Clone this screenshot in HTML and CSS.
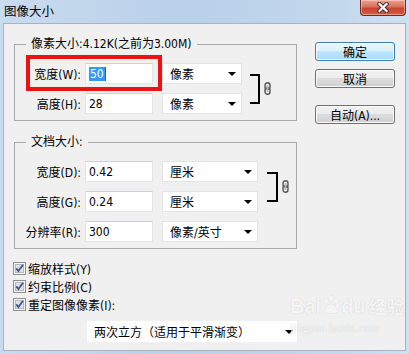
FILE: index.html
```html
<!DOCTYPE html>
<html lang="zh-CN">
<head>
    <meta charset="UTF-8">
    <meta name="viewport" content="width=device-width, initial-scale=1.0">
    <title>图像大小</title>
    <link rel="stylesheet" href="styles.css">
</head>
<body>

<div class="window">
    <div class="titlebar">
        <span class="title">图像大小</span>
        <button class="close" title="关闭">
            <svg width="12" height="11" viewBox="0 0 12 11">
                <path d="M2.5 2l7 7M9.5 2l-7 7" stroke="#4b3030" stroke-width="4.2" stroke-linecap="square"/>
                <path d="M2.5 2l7 7M9.5 2l-7 7" stroke="#fff" stroke-width="2.2" stroke-linecap="square"/>
            </svg>
        </button>
    </div>

    <div class="client">
        <div class="main">
            <!-- 像素大小 -->
            <fieldset class="group">
                <legend>像素大小:4.12K(之前为3.00M)</legend>
                <div class="linked">
                    <div class="rows">
                        <div class="row marked">
                            <label>宽度(W):</label>
                            <div class="field"><span class="sel">50</span><span class="caret"></span></div>
                            <div class="select px">像素<i class="arrow"></i></div>
                            <div class="highlight"></div>
                        </div>
                        <div class="row">
                            <label>高度(H):</label>
                            <div class="field">28</div>
                            <div class="select px">像素<i class="arrow"></i></div>
                        </div>
                    </div>
                    <div class="bracket b1"></div>
                    <svg class="chain" width="7" height="13" viewBox="0 0 7 13">
                        <rect x="1" y="0.8" width="5" height="6.4" rx="2.5" fill="none" stroke="#555" stroke-width="1.4"/>
                        <rect x="1" y="5.8" width="5" height="6.4" rx="2.5" fill="none" stroke="#555" stroke-width="1.4"/>
                        <rect x="2.6" y="3" width="1.8" height="7" fill="#bbb"/>
                    </svg>
                </div>
            </fieldset>

            <!-- 文档大小 -->
            <fieldset class="group">
                <legend>文档大小:</legend>
                <div class="linked">
                    <div class="rows">
                        <div class="row">
                            <label>宽度(D):</label>
                            <div class="field">0.42</div>
                            <div class="select doc">厘米<i class="arrow"></i></div>
                        </div>
                        <div class="row">
                            <label>高度(G):</label>
                            <div class="field">0.24</div>
                            <div class="select doc">厘米<i class="arrow"></i></div>
                        </div>
                    </div>
                    <div class="bracket b2"></div>
                    <svg class="chain" width="7" height="13" viewBox="0 0 7 13">
                        <rect x="1" y="0.8" width="5" height="6.4" rx="2.5" fill="none" stroke="#555" stroke-width="1.4"/>
                        <rect x="1" y="5.8" width="5" height="6.4" rx="2.5" fill="none" stroke="#555" stroke-width="1.4"/>
                        <rect x="2.6" y="3" width="1.8" height="7" fill="#bbb"/>
                    </svg>
                </div>
                <div class="row">
                    <label>分辨率(R):</label>
                    <div class="field">300</div>
                    <div class="select doc">像素/英寸<i class="arrow"></i></div>
                </div>
            </fieldset>

            <div class="checks">
                <div class="check">
                    <svg width="13" height="13" viewBox="0 0 13 13"><rect x="0.5" y="0.5" width="12" height="12" fill="#f6f6f6" stroke="#8e8f8f"/><rect x="2.5" y="2.5" width="8" height="8" fill="#dfe3e8" stroke="#b4b8bd"/><path d="M3.2 6.4l2.2 2.6L10 2.8" fill="none" stroke="#3d5494" stroke-width="1.8"/></svg>
                    <span>缩放样式(Y)</span>
                </div>
                <div class="check">
                    <svg width="13" height="13" viewBox="0 0 13 13"><rect x="0.5" y="0.5" width="12" height="12" fill="#f6f6f6" stroke="#8e8f8f"/><rect x="2.5" y="2.5" width="8" height="8" fill="#dfe3e8" stroke="#b4b8bd"/><path d="M3.2 6.4l2.2 2.6L10 2.8" fill="none" stroke="#3d5494" stroke-width="1.8"/></svg>
                    <span>约束比例(C)</span>
                </div>
                <div class="check">
                    <svg width="13" height="13" viewBox="0 0 13 13"><rect x="0.5" y="0.5" width="12" height="12" fill="#f6f6f6" stroke="#8e8f8f"/><rect x="2.5" y="2.5" width="8" height="8" fill="#dfe3e8" stroke="#b4b8bd"/><path d="M3.2 6.4l2.2 2.6L10 2.8" fill="none" stroke="#3d5494" stroke-width="1.8"/></svg>
                    <span>重定图像像素(I):</span>
                </div>
            </div>

            <div class="method">两次立方（适用于平滑渐变）<i class="arrow"></i></div>
        </div>

        <div class="buttons">
            <button class="btn default">确定</button>
            <button class="btn">取消</button>
            <button class="btn auto">自动(A)...</button>
        </div>

        <div class="watermark">
            <div class="wm-logo">Bai<svg width="18" height="20" viewBox="0 0 18 20"><ellipse cx="4" cy="6" rx="2.2" ry="3" /><ellipse cx="9" cy="3.5" rx="2.2" ry="3"/><ellipse cx="14" cy="6" rx="2.2" ry="3"/><ellipse cx="15.5" cy="11" rx="2" ry="2.6"/><path d="M9 9c-4 0-7 5-6 8 1 2 4 1 6 1s5 1 6-1c1-3-2-8-6-8z"/></svg>du<span class="wm-cn">经验</span></div>
            <div class="wm-url">jingyan.baidu.com</div>
        </div>
    </div>
</div>

</body>
</html>
```

FILE: styles.css
```css
* {
    box-sizing: border-box;
}
html, body {
    margin: 0;
}
body {
    width: 409px;
    height: 354px;
    overflow: hidden;
    font-family: "DejaVu Sans Condensed", "Liberation Sans", "Noto Sans CJK SC", sans-serif;
    font-size: 12px;
    color: #000;
}
.window {
    height: 354px;
    display: flex;
    flex-direction: column;
    background: linear-gradient(to right, #c9dbee, #b9d0e9 45%, #c2d7ec 80%, #cfe0f1);
}
.titlebar {
    height: 23px;
    flex: none;
    display: flex;
    align-items: flex-start;
    padding: 0 3px 0 4px;
}
.title {
    font-family: "Noto Sans CJK SC", sans-serif;
    font-size: 12.5px;
    line-height: 16px;
    margin-top: 3px;
}
.close {
    margin-left: auto;
    width: 46px;
    height: 16px;
    padding: 0;
    border: 1px solid #6e2a20;
    border-top: none;
    border-radius: 0 0 4px 4px;
    background: linear-gradient(#e9a494, #d9705c 45%, #c8462f 55%, #cf5a3f);
    box-shadow: inset 0 0 0 1px rgba(255, 220, 210, 0.5);
    display: flex;
    align-items: center;
    justify-content: center;
}
.client {
    flex: 1;
    margin: 0 3px 3px;
    border: 1px solid #a3b4c8;
    background: #f0f0f0;
    display: flex;
    gap: 18px;
    padding: 12px 10px 0;
    position: relative;
}
.main {
    width: 283px;
    flex: none;
}
.group {
    margin: 0;
    padding: 11px 0 6px;
    border: 1px solid #a9a9a9;
    min-width: 0;
}
.group + .group {
    margin-top: 13px;
}
.group legend {
    margin-left: 11px;
    padding: 0 5px;
    line-height: 16px;
}
.linked {
    display: flex;
    align-items: center;
}
.row {
    display: flex;
    align-items: center;
    height: 21px;
}
.row + .row,
.linked + .row {
    margin-top: 9px;
}
.marked {
    position: relative;
}
.row label {
    width: 66px;
    margin-right: 4px;
    text-align: right;
    white-space: nowrap;
}
.field {
    width: 68px;
    height: 21px;
    background: #fff;
    border: 1px solid #e1e4e8;
    border-top-color: #cdd1d7;
    padding: 0 3px;
    display: flex;
    align-items: center;
}
.sel {
    background: #3399ff;
    color: #fff;
    padding: 0 1px;
    line-height: 14px;
}
.caret {
    width: 1px;
    height: 14px;
    background: #8a4a10;
}
.select {
    height: 21px;
    margin-left: 9px;
    background: #fff;
    border: 1px solid #e4e4e4;
    padding: 0 5px 0 7px;
    display: flex;
    align-items: center;
}
.select.px {
    width: 80px;
}
.select.doc {
    width: 96px;
}
.arrow {
    margin-left: auto;
    width: 0;
    height: 0;
    border: 4px solid transparent;
    border-top: 4px solid #000;
    border-bottom: 0;
}
.highlight {
    position: absolute;
    left: 11px;
    top: -8px;
    width: 136px;
    height: 36px;
    border: 4px solid #ee1111;
}
.bracket {
    height: 30px;
    border: 2px solid #000;
    border-left: 0;
}
.b1 {
    width: 10px;
    margin-left: 8px;
}
.b2 {
    width: 11px;
    margin-left: 9px;
}
.chain {
    margin-left: 4px;
}
.checks {
    margin-top: 10px;
}
.check {
    display: flex;
    align-items: center;
    height: 18px;
    margin-left: -1px;
}
.check svg {
    margin-right: 2px;
}
.method {
    margin: 8px 0 0 73px;
    height: 21px;
    background: #fff;
    padding: 0 4px 0 7px;
    display: flex;
    align-items: center;
}
.buttons {
    width: 80px;
    flex: none;
    display: flex;
    flex-direction: column;
    padding-top: 6px;
}
.btn {
    height: 19px;
    padding: 0;
    font: inherit;
    color: #000;
    border: 1px solid #707070;
    border-radius: 3px;
    background: linear-gradient(#f2f2f2, #ebebeb 49%, #dddddd 50%, #cfcfcf);
    box-shadow: inset 0 0 0 1px #fbfbfb;
}
.btn + .btn {
    margin-top: 8px;
}
.btn.auto {
    margin-top: 17px;
}
.btn.default {
    border-color: #3c7fb1;
    background: linear-gradient(#eaf6fd, #d9f0fc 49%, #bee6fd 50%, #a7d9f5);
    box-shadow: inset 0 0 0 1px #f4fbff;
}
.watermark {
    position: absolute;
    left: 286px;
    top: 270px;
    color: rgba(255, 255, 255, 0.85);
    text-shadow: 0 0 1px rgba(0, 0, 0, 0.22);
    pointer-events: none;
}
.wm-logo {
    display: flex;
    align-items: flex-end;
    font-family: "Liberation Sans", sans-serif;
    font-size: 20px;
    font-weight: bold;
    line-height: 24px;
}
.wm-logo svg {
    fill: rgba(255, 255, 255, 0.85);
    margin: 0 1px 3px;
    filter: drop-shadow(0 0 0.6px rgba(0, 0, 0, 0.3));
}
.wm-cn {
    font-family: "Noto Sans CJK SC", sans-serif;
    font-size: 18px;
    margin-left: 3px;
}
.wm-url {
    font-family: "Liberation Serif", serif;
    font-size: 12px;
    line-height: 14px;
    margin-top: 3px;
}
```
